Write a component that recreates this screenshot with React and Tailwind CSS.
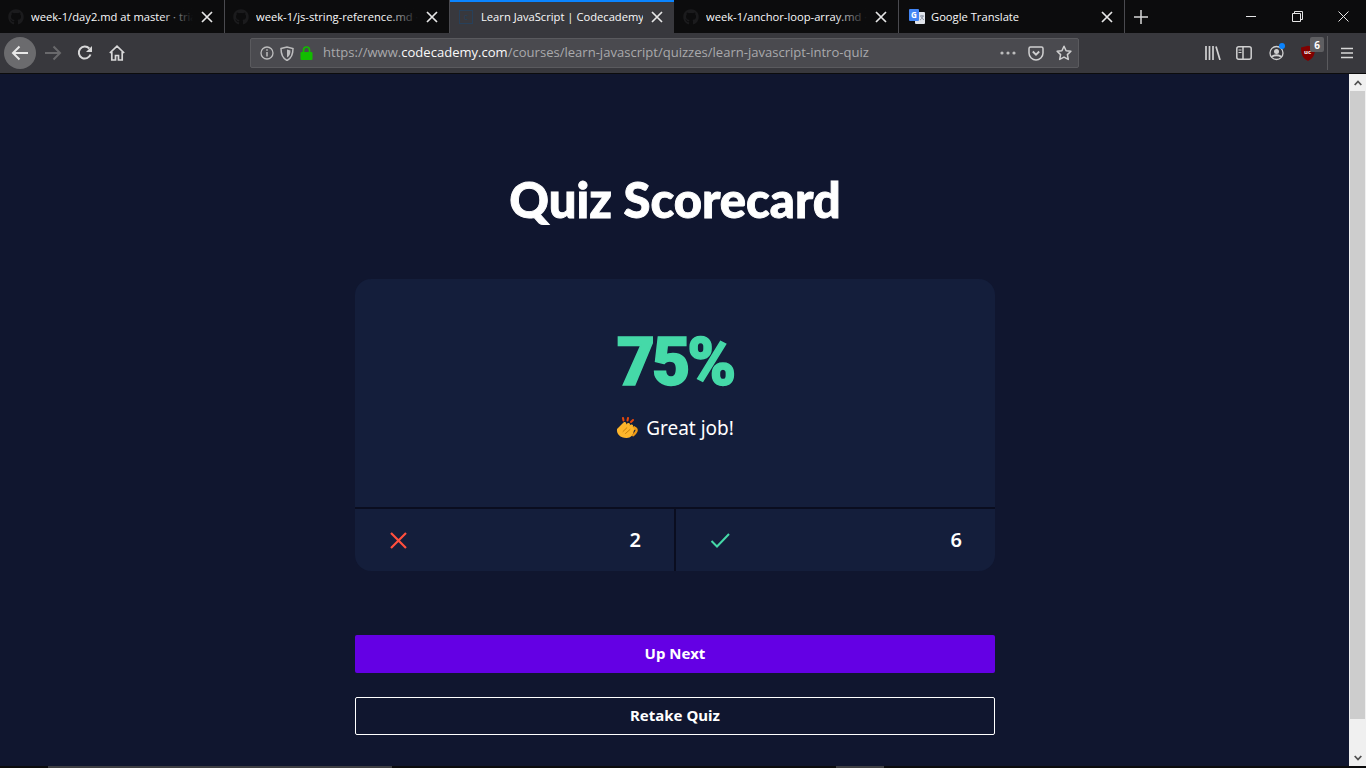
import React from "react";
import { FaGithub } from "react-icons/fa";

const ui = { fontFamily: '"Open Sans","Noto Sans",sans-serif' };

function X({ className = "" }) {
  return (
    <svg width="12" height="12" viewBox="0 0 12 12" className={className}>
      <path d="M1 1L11 11M11 1L1 11" stroke="#e6e6e6" strokeWidth="1.7" fill="none" />
    </svg>
  );
}

function Tab({ w, title, icon, active, sep = true, fade, pad = "pl-[8px]", gap = "ml-[7px]" }) {
  return (
    <div
      className={`relative flex h-full shrink-0 items-center pr-[11px] ${pad} ${w} ${active ? "bg-[#38383d]" : "bg-[#0c0c0d]"} ${sep ? "border-r border-r-[#4a4a4f]" : ""}`}
    >
      {active && <div className="absolute left-0 right-0 top-0 h-[2px] bg-[#0a84ff]" />}
      <div className="flex h-[16px] w-[16px] shrink-0 items-center justify-center">{icon}</div>
      <div className={`relative min-w-0 flex-1 overflow-hidden whitespace-nowrap pt-px text-[11.2px] text-[#f9f9fa] ${gap}`} style={ui}>
        {title}
        {fade && <div className="absolute bottom-0 right-0 top-0 w-[32px] bg-gradient-to-r from-transparent to-[#0c0c0d]" />}
      </div>
      <X className="ml-[8px] shrink-0" />
    </div>
  );
}

const gh = <FaGithub size={16} color="#1b1b1d" />;

function Translate() {
  return (
    <svg width="16" height="16" viewBox="0 0 16 16">
      <rect x="6" y="3" width="10" height="12" rx="1" fill="#dfe3ea" />
      <path d="M11 7h4M13 6v1M14 7c-.5 2-2 3.500-3 4M12 7.500c.5 1.500 1.500 2.500 3 3.200" stroke="#8a93a3" strokeWidth="1" fill="none" />
      <rect x="0" y="0" width="10" height="12" rx="1" fill="#4285f4" />
      <text x="5" y="9" fontSize="8" fontWeight="700" fill="#fff" textAnchor="middle" fontFamily="Open Sans">G</text>
    </svg>
  );
}

function Clap() {
  return (
    <svg width="22" height="22" viewBox="0 0 22 22" className="shrink-0">
      <path d="M7.500 3.500L7 1M11.500 3.500L12 1M15 5L17 3" stroke="#e8470c" strokeWidth="2" strokeLinecap="round" />
      <path d="M1 12L7.500 5.500c1.500-1.300 3.500.2 2.500 2l1.500-1.300c1.500-1 3.300.7 2.200 2.200l1.200-.8c1.500-.8 3 1 1.800 2.400l1-.4c1.500-.4 2.500 1.200 1.500 2.400l-1.500 2c-.2 4-3 6.900-7 6.900C4.300 21 .3 17 1 12z" fill="#fdb52b" />
      <path d="M18.500 10.500c2 .8 2.500 2.500 1.700 4-.7 1.500-1.700 2.700-2.900 3.700" stroke="#f09a14" strokeWidth="2.400" fill="none" strokeLinecap="round" />
      <path d="M7 14.500L10.800 10.800M9.500 16.500L14 12.500" stroke="#c27a08" strokeWidth="0.900" fill="none" strokeLinecap="round" />
    </svg>
  );
}

function Stat({ icon, value, className = "" }) {
  return (
    <div className={`flex flex-1 items-center justify-between pl-[34px] pr-[33px] ${className}`}>
      {icon}
      <span className="text-[20px] font-semibold leading-none text-white" style={{ fontFamily: '"Noto Sans",sans-serif' }}>{value}</span>
    </div>
  );
}

export default function App() {
  return (
    <div className="flex h-[768px] w-[1366px] flex-col overflow-hidden bg-[#0c0c0d]">
      {/* tab strip */}
      <div className="flex h-[33px] shrink-0 items-stretch bg-[#0c0c0d]">
        <Tab w="w-[225px]" title="week-1/day2.md at master · trial" icon={gh} fade />
        <Tab w="w-[225px]" title="week-1/js-string-reference.md · trial" icon={gh} fade />
        <Tab
          w="w-[224px]"
          sep={false}
          active
          title="Learn JavaScript | Codecademy"
          icon={
            <div className="flex h-[14px] w-[14px] items-center justify-center border border-[#27405a] text-[9px] leading-none text-[#27405a]" style={ui}>c</div>
          }
        />
        <Tab w="w-[225px]" pad="pl-[9px]" title="week-1/anchor-loop-array.md · trial" icon={gh} fade />
        <Tab w="w-[226px]" pad="pl-[10px]" gap="ml-[6px]" title="Google Translate" icon={<Translate />} />
        <div className="flex w-[32px] shrink-0 items-center justify-center">
          <svg width="14" height="14" viewBox="0 0 14 14">
            <path d="M7 0V14M0 7H14" stroke="#d7d7d8" strokeWidth="1.500" />
          </svg>
        </div>
        <div className="ml-auto flex">
          <div className="flex w-[47px] items-center justify-center">
            <div className="h-px w-[10px] bg-[#e6e6e6]" />
          </div>
          <div className="flex w-[46px] items-center justify-center">
            <svg width="11" height="11" viewBox="0 0 11 11">
              <path d="M.5 2.500h8v8h-8zM2.500 2.500v-2h8v8h-2" stroke="#e6e6e6" fill="none" />
            </svg>
          </div>
          <div className="flex w-[46px] items-center justify-center">
            <svg width="11" height="11" viewBox="0 0 11 11">
              <path d="M.5 .5L10.500 10.500M10.500 .5L.5 10.500" stroke="#e6e6e6" fill="none" />
            </svg>
          </div>
        </div>
      </div>

      {/* nav bar */}
      <div className="flex h-[41px] shrink-0 items-center border-b border-b-[#0c0c0d] bg-[#38383d] pl-[4px]">
        <div className="flex h-[32px] w-[32px] items-center justify-center rounded-full bg-[#6b6b6e]">
          <svg width="18" height="16" viewBox="0 0 18 16">
            <path d="M17 8H2M8.500 1.500L2 8l6.500 6.500" stroke="#e8e8e8" strokeWidth="2" fill="none" />
          </svg>
        </div>
        <div className="ml-[4px] flex w-[26px] justify-center">
          <svg width="18" height="16" viewBox="0 0 18 16">
            <path d="M1 8H16M9.500 1.500L16 8l-6.500 6.500" stroke="#69696c" strokeWidth="2" fill="none" />
          </svg>
        </div>
        <div className="ml-[6px] flex w-[26px] justify-center">
          <svg width="16" height="16" viewBox="0 0 16 16">
            <path d="M13.500 9.500A6 6 0 1 1 12.300 3.500" stroke="#d7d7d8" strokeWidth="2" fill="none" />
            <path d="M15 1v6H9z" fill="#d7d7d8" />
          </svg>
        </div>
        <div className="ml-[6px] flex w-[26px] justify-center">
          <svg width="16" height="16" viewBox="0 0 16 16">
            <path d="M.8 8L8 1.200 15.200 8M2.800 6.800V15h3.700v-4.500h3V15h3.700V6.800" stroke="#d7d7d8" strokeWidth="1.700" fill="none" />
          </svg>
        </div>

        {/* url bar */}
        <div className="ml-[120px] flex h-[30px] w-[829px] shrink-0 items-center rounded-[2px] border border-[#5a5a5e] bg-[#4a4a4f] pl-[9px] pr-[6px]">
          <svg width="14" height="14" viewBox="0 0 14 14" className="shrink-0">
            <circle cx="7" cy="7" r="6" stroke="#bdbdbe" strokeWidth="1.300" fill="none" />
            <path d="M7 6v4.500M7 3.300v1.500" stroke="#bdbdbe" strokeWidth="1.500" />
          </svg>
          <svg width="14" height="15" viewBox="0 0 14 15" className="ml-[6px] shrink-0">
            <path d="M1 2.500L7 1l6 1.500c0 5-1 9.500-6 12C2 12 1 7.500 1 2.500z" stroke="#bdbdbe" strokeWidth="1.500" fill="none" />
            <path d="M7 3.500l3.500 1c0 3-.7 5.500-3.500 7z" fill="#bdbdbe" />
          </svg>
          <svg width="13" height="14" viewBox="0 0 13 14" className="ml-[6px] shrink-0">
            <path d="M3.500 6.500V4a3 3 0 0 1 6 0v2.500" stroke="#12bc00" strokeWidth="1.700" fill="none" />
            <rect x="0.500" y="6" width="12" height="8" rx="1" fill="#12bc00" />
          </svg>
          <div className="ml-[10px] whitespace-nowrap text-[13.05px] text-[#a9a9ac]" style={ui}>
            https://www.<span className="text-[#f9f9fa]">codecademy.com</span>/courses/learn-javascript/quizzes/learn-javascript-intro-quiz
          </div>
          <div className="ml-auto flex items-center">
            <svg width="16" height="4" viewBox="0 0 16 4">
              <circle cx="2" cy="2" r="1.600" fill="#bdbdbe" />
              <circle cx="8" cy="2" r="1.600" fill="#bdbdbe" />
              <circle cx="14" cy="2" r="1.600" fill="#bdbdbe" />
            </svg>
            <svg width="16" height="15" viewBox="0 0 16 15" className="ml-[12px]">
              <path d="M1 2.500C1 1.500 1.500 1 2.500 1h11c1 0 1.500.5 1.500 1.500V7c0 4-3.500 7-7 7S1 11 1 7z" stroke="#d0d0d1" strokeWidth="1.500" fill="none" />
              <path d="M4.800 5.500L8 8.700l3.200-3.200" stroke="#d0d0d1" strokeWidth="1.800" fill="none" />
            </svg>
            <svg width="16" height="16" viewBox="0 0 16 16" className="ml-[12px]">
              <path d="M8 1.300l2.100 4.400 4.800.6-3.500 3.300.9 4.800L8 12.100l-4.300 2.300.9-4.800L1.100 6.300l4.800-.6z" stroke="#d0d0d1" strokeWidth="1.500" fill="none" strokeLinejoin="round" />
            </svg>
          </div>
        </div>

        <div className="ml-[126px] flex h-[16px] w-[16px] items-center justify-center">
          <svg width="16" height="14" viewBox="0 0 16 14">
            <path d="M1 0v14M4.500 0v14M8 0v14M11 .5L15 14" stroke="#d0d0d1" strokeWidth="1.700" fill="none" />
          </svg>
        </div>
        <svg width="16" height="14" viewBox="0 0 16 14" className="ml-[15px]">
          <rect x=".8" y=".8" width="14.400" height="12.400" rx="2" stroke="#d0d0d1" strokeWidth="1.500" fill="none" />
          <path d="M7 1v12" stroke="#d0d0d1" strokeWidth="1.500" />
          <path d="M2.500 4h3M2.500 6.500h3" stroke="#d0d0d1" />
        </svg>
        <div className="relative ml-[17px] h-[16px] w-[15px]">
          <svg width="15" height="16" viewBox="0 0 15 16">
            <circle cx="7.500" cy="8" r="6.500" stroke="#d0d0d1" strokeWidth="1.300" fill="none" />
            <circle cx="7.500" cy="6.500" r="2.500" fill="#d0d0d1" />
            <path d="M3 12c1-2.500 8-2.500 9 0" stroke="#d0d0d1" strokeWidth="2" fill="none" />
          </svg>
          <div className="absolute right-[-1px] top-[-2px] h-[6px] w-[6px] rounded-full bg-[#0a84ff]" />
        </div>
        <div className="relative ml-[17px] h-[16px] w-[14px]">
          <svg width="14" height="16" viewBox="0 0 14 16">
            <path d="M0 2.500L7 .8l7 1.700c0 6-1 10.500-7 13.500C1 13 0 8.500 0 2.500z" fill="#800000" />
          </svg>
          <div className="absolute left-[3px] top-[4px] text-[6px] font-bold leading-none text-white" style={ui}>uc</div>
          <div className="absolute left-[9px] top-[-8px] flex h-[15px] w-[14px] items-center justify-center rounded-[2px] bg-[#5f5f62] text-[10px] font-bold leading-none text-white" style={ui}>6</div>
        </div>
        <div className="ml-[12px] h-[34px] w-px bg-[#5a5a5e]" />
        <svg width="12" height="12" viewBox="0 0 12 12" className="ml-[13px]">
          <path d="M0 1.500H12M0 6H12M0 10.500H12" stroke="#d7d7d8" strokeWidth="1.700" />
        </svg>
      </div>

      {/* page */}
      <div className="flex min-h-0 flex-1">
        <main className="flex min-w-0 flex-1 flex-col items-center bg-[#10162f] pl-px pt-[95px]">
          <h1
            className="text-[49px] font-black leading-[60px] text-white [-webkit-text-stroke:0.9px_white]"
            style={{ fontFamily: 'Lato,"Noto Sans",sans-serif' }}
          >
            Quiz Scorecard
          </h1>
          <div className="mt-[50px] w-[640px] overflow-hidden rounded-[16px] bg-[#141e3b]">
            <div className="flex h-[230px] flex-col items-center border-b-2 border-b-[#0a0d1f] pt-[46px]">
              <div className="text-[66px] font-black leading-[76px] tracking-[-3px] text-[#45d9a8] [-webkit-text-stroke:1.500px_#45d9a8]" style={{ fontFamily: 'Roboto,sans-serif' }}>
                75%
              </div>
              <div className="mt-[13px] flex items-center text-[19px] leading-[28px] text-white" style={{ fontFamily: '"Noto Sans",sans-serif' }}>
                <Clap />
                <span className="ml-[8px]">Great job!</span>
              </div>
            </div>
            <div className="flex h-[62px]">
              <Stat
                className="border-r-2 border-r-[#0a0d1f]"
                value="2"
                icon={
                  <svg width="18" height="18" viewBox="0 0 18 18">
                    <path d="M2 2L17 17M17 2L2 17" stroke="#ff4f3d" strokeWidth="2.200" fill="none" />
                  </svg>
                }
              />
              <Stat
                value="6"
                icon={
                  <svg width="20" height="16" viewBox="0 0 20 16">
                    <path d="M1.500 9L7 14.500 19 2" stroke="#45d9a8" strokeWidth="2" fill="none" />
                  </svg>
                }
              />
            </div>
          </div>
          <button
            className="mt-[64px] h-[38px] w-[640px] rounded-[2px] bg-[#6400e4] pb-[2px] text-[15px] font-bold text-white"
            style={{ fontFamily: '"Noto Sans",sans-serif' }}
          >
            Up Next
          </button>
          <button
            className="mt-[24px] h-[38px] w-[640px] rounded-[2px] border border-white bg-transparent pb-[2px] text-[15px] font-bold text-white"
            style={{ fontFamily: '"Noto Sans",sans-serif' }}
          >
            Retake Quiz
          </button>
        </main>
        {/* scrollbar */}
        <div className="flex w-[17px] shrink-0 flex-col bg-[#f0f0f0]">
          <div className="flex h-[17px] items-center justify-center">
            <svg width="8" height="6" viewBox="0 0 8 6">
              <path d="M.7 5L4 1.500 7.300 5" stroke="#505050" strokeWidth="1.800" fill="none" />
            </svg>
          </div>
          <div className="flex-1 px-px">
            <div className="h-[628px] bg-[#cdcdcd]" />
          </div>
          <div className="flex h-[17px] items-center justify-center">
            <svg width="8" height="6" viewBox="0 0 8 6">
              <path d="M.7 1L4 4.500 7.300 1" stroke="#505050" strokeWidth="1.800" fill="none" />
            </svg>
          </div>
        </div>
      </div>
      {/* strip under the page */}
      <div className="flex h-[2px] shrink-0 bg-[#0c0c0d]">
        <div className="ml-[48px] w-[344px] bg-[#3f3f42]" />
        <div className="ml-[444px] w-[48px] bg-[#3f3f42]" />
      </div>
    </div>
  );
}
